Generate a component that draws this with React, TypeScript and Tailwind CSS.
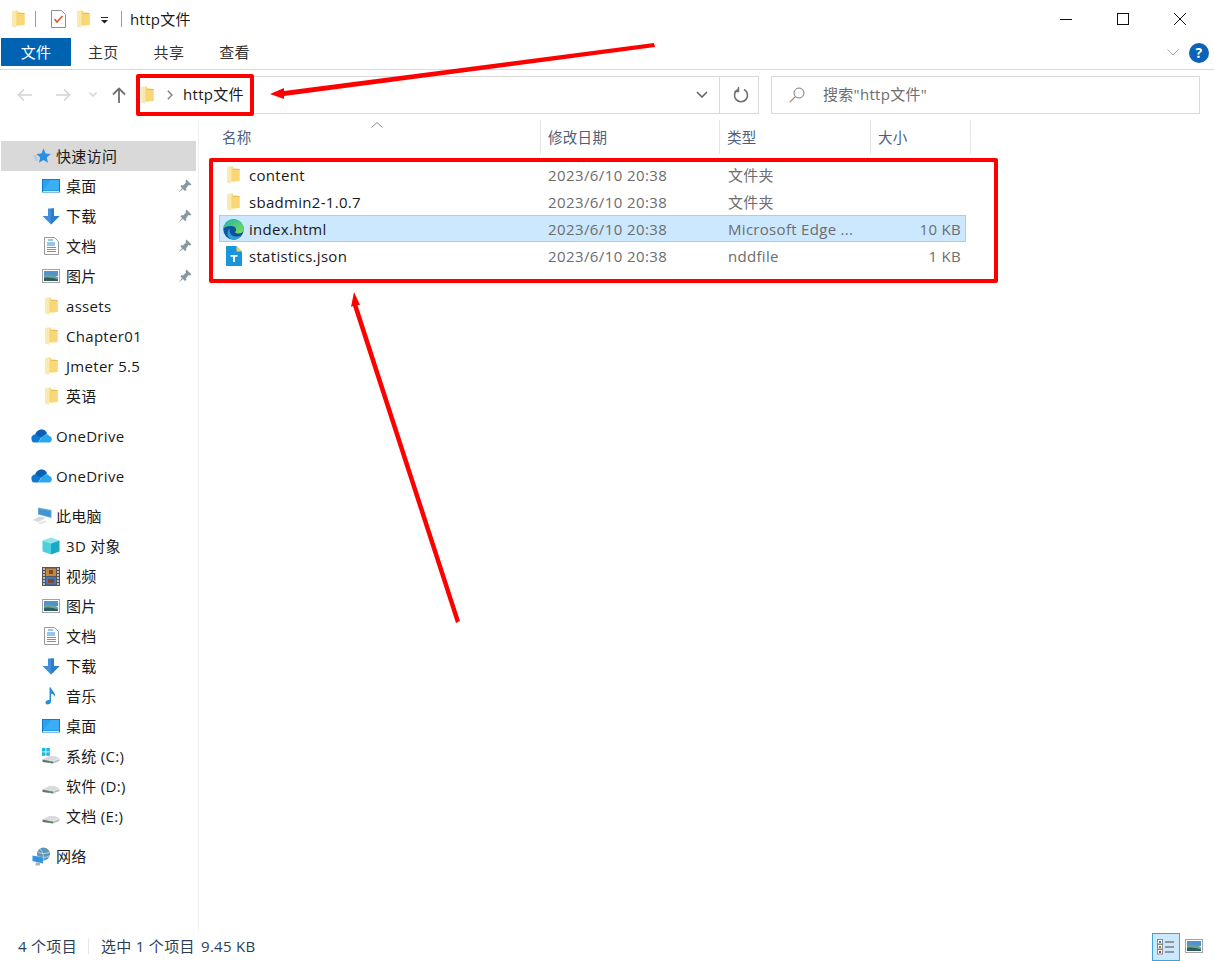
import type { ReactNode } from "react";

const FolderIcon = ({ className = "h-[18px] w-[13px]" }: { className?: string }) => (
  <svg viewBox="0 0 13 18" className={className}>
    <path d="M0.5 1 L6 0.5 L6 2.5 L12.5 3 L12.5 15 L4 15.5 L4 17.5 L0.5 16.5 Z" fill="#f6d67c" />
    <path d="M0.5 1 L4.5 0.5 L4.5 15.5 L3.8 17.5 L0.5 16.5 Z" fill="#fbeab0" />
    <path d="M4.5 3 L12.5 3 L12.5 15 L4.5 15.5 Z" fill="#fad776" />
    <path d="M6 2.8 L12.5 3 L12.5 4 L6 3.8 Z" fill="#e5b95a" />
  </svg>
);

const DesktopIcon = () => (
  <svg viewBox="0 0 18 14" className="h-[14px] w-[18px]">
    <rect x="0" y="0" width="18" height="13.5" fill="#0a7fd0" />
    <path d="M1 1 H17 V11.5 H1 Z" fill="#2aa2f0" />
    <path d="M1 11.5 L9 1 H17 V11.5 Z" fill="#4ab8f7" opacity="0.6" />
    <rect x="1" y="12" width="16" height="1" fill="#cfe9fb" />
  </svg>
);

const DownloadIcon = () => (
  <svg viewBox="0 0 18 17" className="h-[17px] w-[18px]">
    <path d="M6 0.5 H12 V8 H17.5 L9 16.5 L0.5 8 H6 Z" fill="#3d8fdc" />
    <path d="M9 0.5 H12 V8 H17.5 L9 16.5 Z" fill="#2f7cc8" />
  </svg>
);

const DocIcon = () => (
  <svg viewBox="0 0 15 18" className="h-[18px] w-[15px]">
    <path d="M0.5 0.5 H10.5 L14.5 4.5 V17.5 H0.5 Z" fill="#fff" stroke="#9a9a9a" />
    <path d="M4 3 H9 M3 6 H11 M3 8 H11" stroke="#2f8ad6" strokeWidth="1" />
    <path d="M3 10.5 H12 M3 12.5 H12 M3 14.5 H12" stroke="#8c8c8c" strokeWidth="1" />
  </svg>
);

const PictureIcon = () => (
  <svg viewBox="0 0 18 14" className="h-[14px] w-[18px]">
    <rect x="0.5" y="0.5" width="17" height="13" fill="#fff" stroke="#a4a4a4" />
    <rect x="2" y="2" width="14" height="5" fill="#4f93cf" />
    <path d="M2 7 C6 4 10 6 16 8 V12 H2 Z" fill="#6f9f96" />
    <path d="M2 9 C7 8 11 9 16 10.5 V12 H2 Z" fill="#2c5f63" />
  </svg>
);

const PinIcon = () => (
  <svg viewBox="0 0 14 14" className="h-[14px] w-[14px]">
    <path d="M8.5 0.5 L13.5 5.5 L12 6.5 L10.5 6 L8 9.5 L8.5 11 L7 12 L2.5 7.5 L3.5 6 L5 6.5 L8 3.5 L7.5 2 Z" fill="#8b979f" />
    <path d="M4 9 L0.5 13.5 L5 10 Z" fill="#8b979f" />
  </svg>
);

const StarIcon = () => (
  <svg viewBox="0 0 18 16" className="h-[16px] w-[18px]">
    <path d="M10.5 0.5 L12.6 5.6 L17.8 6 L13.8 9.4 L15 14.8 L10.5 12 L6 14.8 L7.2 9.4 L3.5 6 L8.4 5.6 Z" fill="#2a8fe0" />
    <path d="M0 8 H4 M1 10 H5 M2 12 H5" stroke="#8cc4ee" strokeWidth="1" />
  </svg>
);

const CloudIcon = () => (
  <svg viewBox="0 0 21 14" className="h-[14px] w-[21px]">
    <path d="M4 7 C4 2.5 8 0 11.5 0.5 C14 1 15.5 2.5 16 4.5 L10 9 Z" fill="#0a5fb4" />
    <path d="M0.5 10 C0 7 2 5.5 4.5 5.5 L10 9 L7 13.5 H3 C1.5 13.5 0.7 12 0.5 10 Z" fill="#0f78d4" />
    <path d="M7 13.5 L12 7 C14 4.5 17.5 4.5 18 7 C20 7 21 9 20.8 10.5 C20.7 12.5 19.5 13.5 18 13.5 Z" fill="#29a8ea" />
  </svg>
);

const PcIcon = () => (
  <svg viewBox="0 0 20 18" className="h-[18px] w-[20px]">
    <path d="M6 0.5 L19.5 3 V11 L6 7.5 Z" fill="#6fa8cf" />
    <path d="M7 2 L18.5 4 V10 L7 7 Z" fill="#3d94d6" />
    <path d="M0.5 13 L8 9.5 L14 11 L6 15 Z" fill="#d5d9dc" />
    <path d="M6 15.5 L13 13.5 L15 15 L8 17.5 Z" fill="#e4e7e9" />
  </svg>
);

const CubeIcon = () => (
  <svg viewBox="0 0 18 18" className="h-[18px] w-[18px]">
    <path d="M9 0.5 L17.5 3.5 L9 6.5 L0.5 3.5 Z" fill="#8fe3ea" />
    <path d="M0.5 3.5 L9 6.5 V17.5 L0.5 14.5 Z" fill="#4fcfdc" />
    <path d="M17.5 3.5 V14.5 L9 17.5 V6.5 Z" fill="#18a9c4" />
  </svg>
);

const FilmIcon = () => (
  <svg viewBox="0 0 18 19" className="h-[19px] w-[18px]">
    <rect width="18" height="19" fill="#555" />
    <path d="M1 2 H3 M1 5 H3 M1 8 H3 M1 11 H3 M1 14 H3 M1 17 H3 M15 2 H17 M15 5 H17 M15 8 H17 M15 11 H17 M15 14 H17 M15 17 H17" stroke="#ddd" strokeWidth="1.4" />
    <rect x="4" y="1.5" width="10" height="7.5" fill="#c9853a" />
    <rect x="4" y="10" width="10" height="7.5" fill="#3e78c4" />
    <path d="M7 3 H11 V7 H7 Z M6 12 H12 V16 H6 Z" fill="#7d4a2a" />
  </svg>
);

const MusicIcon = () => (
  <svg viewBox="0 0 12 18" className="h-[18px] w-[12px]">
    <path d="M4.5 0.5 H6 C6.5 4 11 5 10 10 C9.5 8 8 7 6 6.8 V14.5 C6 16.5 4 17.5 2.5 17.5 C1 17.5 0.5 16.5 0.5 15.5 C0.5 14 2.5 12.8 4.5 13.2 Z" fill="#1f8fe0" />
  </svg>
);

const DriveIcon = ({ windows }: { windows?: boolean }) => (
  <svg viewBox="0 0 18 16" className="h-[16px] w-[18px]">
    {windows && (
      <g fill="#19b5e8">
        <rect x="0" y="0" width="3.5" height="3.5" />
        <rect x="4.3" y="0" width="3.5" height="3.5" />
        <rect x="0" y="4.3" width="3.5" height="3.5" />
        <rect x="4.3" y="4.3" width="3.5" height="3.5" />
      </g>
    )}
    <path d="M0.5 11.5 L7 8 H13 L17.5 10.5 L11 13 Z" fill="#d9dcdd" />
    <path d="M0.5 11.5 L11 13.5 V15.5 L0.5 14 Z" fill="#6d6f70" />
    <path d="M11 13.5 L17.5 11 V13 L11 15.5 Z" fill="#b9bcbd" />
    <rect x="7" y="13.5" width="2" height="1.2" fill="#3fd14a" />
  </svg>
);

const NetIcon = () => (
  <svg viewBox="0 0 19 19" className="h-[19px] w-[19px]">
    <circle cx="11.5" cy="7" r="6.5" fill="#5f95b5" />
    <path d="M8 2 C11 5 12 9 11 13 M6 5 C9 7 14 7 17.5 5 M5.5 9 C9 11 14 11 18 8.5" stroke="#cfe2ee" strokeWidth="0.8" fill="none" />
    <path d="M0.5 8.5 L11 10.5 V16.5 L0.5 14 Z" fill="#2f95e2" />
    <path d="M4 15 L8 16 V18.5 H3.5 Z" fill="#aab4bb" />
  </svg>
);

const EdgeIcon = () => (
  <svg viewBox="0 0 21 21" className="h-[21px] w-[21px]">
    <defs>
      <linearGradient id="edge-top" x1="0" y1="0" x2="1" y2="1">
        <stop offset="0" stopColor="#1fb6a8" />
        <stop offset="1" stopColor="#7ede56" />
      </linearGradient>
      <linearGradient id="edge-low" x1="0" y1="0" x2="1" y2="0">
        <stop offset="0" stopColor="#0c59a4" />
        <stop offset="1" stopColor="#114a8b" />
      </linearGradient>
    </defs>
    <circle cx="10.5" cy="10.5" r="10.2" fill="url(#edge-low)" />
    <path d="M0.4 9.5 C1.5 3.5 6 0.3 10.5 0.3 C16 0.3 20.7 4.5 20.7 10 C20.7 13 18.5 14.5 15.5 14.5 C13.5 14.5 12 13.8 12 13 C14 12 13.5 8 10 7.2 C6 6.3 2 7.5 0.4 9.5 Z" fill="url(#edge-top)" />
    <path d="M9.5 20.6 C4 19.5 3 12.5 7 9.2 C5.5 13 8 17.5 13 17.5 C15 17.5 17 17 18.5 16 C16.5 19.5 13 21.2 9.5 20.6 Z" fill="#2b9fe0" />
  </svg>
);

const TextFileIcon = () => (
  <svg viewBox="0 0 16 20" className="h-[20px] w-[16px]">
    <path d="M1 0 H10.5 L16 5.5 V19 C16 19.6 15.6 20 15 20 H1 C0.4 20 0 19.6 0 19 V1 C0 0.4 0.4 0 1 0 Z" fill="#1796dc" />
    <path d="M10.5 0 L16 5.5 H10.5 Z" fill="#f1cf6b" />
    <path d="M4.5 9 H11.5 V10.8 H9 V16 H7 V10.8 H4.5 Z" fill="#fff" />
  </svg>
);

const NavRow = ({
  icon,
  label,
  top,
  pinned,
  active,
}: {
  icon: ReactNode;
  label: string;
  top?: boolean;
  pinned?: boolean;
  active?: boolean;
}) => (
  <div
    className={`flex h-[30px] items-center ${active ? "bg-[#d9d9d9]" : ""} ${top ? "pl-[30px]" : "pl-[41px]"} ml-px mr-[2px]`}
  >
    <div className={`flex items-center justify-center ${top ? "w-[21px]" : "w-[18px]"}`}>{icon}</div>
    <span className={`${top ? "ml-[4px]" : "ml-[6px]"} text-[15px] whitespace-nowrap text-[#1a1a1a]`}>{label}</span>
    {pinned && (
      <div className="mr-[4px] ml-auto">
        <PinIcon />
      </div>
    )}
  </div>
);

const files = [
  { icon: <FolderIcon />, name: "content", type: "文件夹", size: "" },
  { icon: <FolderIcon />, name: "sbadmin2-1.0.7", type: "文件夹", size: "" },
  { icon: <EdgeIcon />, name: "index.html", type: "Microsoft Edge ...", size: "10 KB", selected: true },
  { icon: <TextFileIcon />, name: "statistics.json", type: "nddfile", size: "1 KB" },
];

const App = () => {
  return (
    <div className="relative flex h-[961px] w-[1214px] flex-col overflow-hidden bg-white font-['Open_Sans','Noto_Sans_CJK_SC',sans-serif] tracking-[0.3px] text-[#1a1a1a]">
      {/* title bar */}
      <div className="flex h-[38px] items-center">
        <div className="ml-[12px]">
          <FolderIcon className="h-[18px] w-[13px]" />
        </div>
        <div className="ml-[10px] h-[16px] w-px bg-[#9a9a9a]" />
        <svg viewBox="0 0 15 18" className="ml-[15px] h-[18px] w-[15px]">
          <path d="M0.5 0.5 H10.5 L14.5 4.5 V17.5 H0.5 Z" fill="#fff" stroke="#8f8f8f" />
          <path d="M3.5 9 L6 12 L11.5 6" stroke="#e2572b" strokeWidth="1.6" fill="none" />
        </svg>
        <div className="ml-[11px]">
          <FolderIcon />
        </div>
        <svg viewBox="0 0 8 7" className="ml-[11px] mt-[3px] h-[7px] w-[8px]">
          <rect x="0" y="0" width="7" height="1" fill="#222" />
          <path d="M0 3 H7 L3.5 6.5 Z" fill="#222" />
        </svg>
        <div className="ml-[12px] h-[16px] w-px bg-[#9a9a9a]" />
        <span className="ml-[8px] text-[15px]">http文件</span>
        <svg viewBox="0 0 12 12" className="ml-auto h-[12px] w-[12px]">
          <path d="M0 6.5 H12" stroke="#111" strokeWidth="1" />
        </svg>
        <svg viewBox="0 0 12 12" className="ml-[45px] h-[12px] w-[12px]">
          <rect x="0.5" y="0.5" width="11" height="11" fill="none" stroke="#111" />
        </svg>
        <svg viewBox="0 0 12 12" className="mr-[28px] ml-[45px] h-[12px] w-[12px]">
          <path d="M0 0 L12 12 M12 0 L0 12" stroke="#111" strokeWidth="1" />
        </svg>
      </div>

      {/* ribbon tabs */}
      <div className="flex h-[32px] items-start border-b border-[#dadada]">
        <div className="ml-px flex h-[28px] w-[70px] items-center justify-center bg-[#0063b1] text-[15px] text-white">文件</div>
        <span className="ml-[17px] flex h-[28px] items-center text-[15px] text-[#333]">主页</span>
        <span className="ml-[35px] flex h-[28px] items-center text-[15px] text-[#333]">共享</span>
        <span className="ml-[35px] flex h-[28px] items-center text-[15px] text-[#333]">查看</span>
        <svg viewBox="0 0 12 7" className="mt-[11px] ml-auto h-[7px] w-[12px]">
          <path d="M0.5 0.5 L6 6 L11.5 0.5" stroke="#a8a8a8" fill="none" />
        </svg>
        <div className="mt-[5px] mr-[5px] ml-[10px] flex h-[20px] w-[20px] items-center justify-center rounded-full bg-[#0a63b8] text-[14px] leading-none font-bold text-white">
          ?
        </div>
      </div>

      {/* address bar */}
      <div className="mt-[5px] flex h-[39px] items-center">
        <svg viewBox="0 0 16 14" className="ml-[17px] h-[14px] w-[16px]">
          <path d="M15 7 H1.5 M7 1.5 L1.5 7 L7 12.5" stroke="#d4d4d4" strokeWidth="1.6" fill="none" />
        </svg>
        <svg viewBox="0 0 16 14" className="ml-[22px] h-[14px] w-[16px]">
          <path d="M1 7 H14.5 M9 1.5 L14.5 7 L9 12.5" stroke="#d4d4d4" strokeWidth="1.6" fill="none" />
        </svg>
        <svg viewBox="0 0 8 5" className="ml-[18px] h-[5px] w-[8px]">
          <path d="M0.5 0.5 L4 4 L7.5 0.5" stroke="#d4d4d4" strokeWidth="1.4" fill="none" />
        </svg>
        <svg viewBox="0 0 14 16" className="ml-[15px] h-[16px] w-[14px]">
          <path d="M7 16 V2 M1 7.5 L7 1.5 L13 7.5" stroke="#6f6f6f" strokeWidth="1.8" fill="none" />
        </svg>
        <div className="ml-[10px] flex h-[38px] w-[623px] items-center border border-[#d9d9d9]">
          <div className="ml-[4px]">
            <FolderIcon />
          </div>
          <svg viewBox="0 0 6 10" className="ml-[13px] h-[10px] w-[6px]">
            <path d="M0.8 0.8 L5 5 L0.8 9.2" stroke="#7c7c7c" strokeWidth="1.3" fill="none" />
          </svg>
          <span className="ml-[10px] text-[15px]">http文件</span>
          <svg viewBox="0 0 12 7" className="ml-auto h-[7px] w-[12px]">
            <path d="M1 1 L6 6 L11 1" stroke="#666" strokeWidth="1.6" fill="none" />
          </svg>
          <div className="ml-[11px] flex h-full w-[39px] items-center justify-center border-l border-[#d9d9d9]">
            <svg viewBox="0 0 16 16" className="ml-[3px] h-[16px] w-[16px]">
              <path d="M5 2.5 A6.5 6.5 0 1 0 11 2.5" stroke="#6f6f6f" strokeWidth="1.6" fill="none" />
              <path d="M4 0 V4.5 H0" stroke="#6f6f6f" strokeWidth="1.4" fill="none" transform="translate(1.5 0)" />
            </svg>
          </div>
        </div>
        <div className="ml-[12px] flex h-[38px] w-[429px] items-center border border-[#d9d9d9]">
          <svg viewBox="0 0 16 16" className="ml-[17px] h-[16px] w-[16px]">
            <circle cx="10" cy="6" r="5" stroke="#7a7a7a" fill="none" />
            <path d="M6.5 9.5 L0.8 15.2" stroke="#b58a5a" strokeWidth="1.2" />
          </svg>
          <span className="ml-[18px] text-[15px] text-[#6d6d6d]">搜索"http文件"</span>
        </div>
      </div>

      {/* body */}
      <div className="mt-[6px] flex min-h-0 flex-1">
        <nav className="w-[199px] border-r border-[#f0f0f0] pt-[21px]">
          <NavRow top active icon={<StarIcon />} label="快速访问" />
          <NavRow pinned icon={<DesktopIcon />} label="桌面" />
          <NavRow pinned icon={<DownloadIcon />} label="下载" />
          <NavRow pinned icon={<DocIcon />} label="文档" />
          <NavRow pinned icon={<PictureIcon />} label="图片" />
          <NavRow icon={<FolderIcon />} label="assets" />
          <NavRow icon={<FolderIcon />} label="Chapter01" />
          <NavRow icon={<FolderIcon />} label="Jmeter 5.5" />
          <NavRow icon={<FolderIcon />} label="英语" />
          <div className="mt-[10px]">
            <NavRow top icon={<CloudIcon />} label="OneDrive" />
          </div>
          <div className="mt-[10px]">
            <NavRow top icon={<CloudIcon />} label="OneDrive" />
          </div>
          <div className="mt-[10px]">
            <NavRow top icon={<PcIcon />} label="此电脑" />
          </div>
          <NavRow icon={<CubeIcon />} label="3D 对象" />
          <NavRow icon={<FilmIcon />} label="视频" />
          <NavRow icon={<PictureIcon />} label="图片" />
          <NavRow icon={<DocIcon />} label="文档" />
          <NavRow icon={<DownloadIcon />} label="下载" />
          <NavRow icon={<MusicIcon />} label="音乐" />
          <NavRow icon={<DesktopIcon />} label="桌面" />
          <NavRow icon={<DriveIcon windows />} label="系统 (C:)" />
          <NavRow icon={<DriveIcon />} label="软件 (D:)" />
          <NavRow icon={<DriveIcon />} label="文档 (E:)" />
          <div className="mt-[10px]">
            <NavRow top icon={<NetIcon />} label="网络" />
          </div>
        </nav>

        <main className="relative flex-1 pl-[20px]">
          <svg viewBox="0 0 12 6" className="absolute top-[2px] left-[172px] h-[6px] w-[12px]">
            <path d="M0.5 5.5 L6 0.5 L11.5 5.5" stroke="#8a8a8a" fill="none" />
          </svg>
          <div className="flex h-[34px] text-[14.5px] text-[#4c607a]">
            <div className="flex w-[322px] items-center border-r border-[#e5e5e5] pt-px pl-[3px]">名称</div>
            <div className="flex w-[179px] items-center border-r border-[#e5e5e5] pt-px pl-[7px]">修改日期</div>
            <div className="flex w-[151px] items-center border-r border-[#e5e5e5] pt-px pl-[7px]">类型</div>
            <div className="flex w-[100px] items-center border-r border-[#e5e5e5] pt-px pl-[7px]">大小</div>
          </div>
          <div className="mt-[7px] w-[747px]">
            {files.map((f) => (
              <div
                key={f.name}
                className={`flex h-[27px] items-center border pt-px text-[15px] ${f.selected ? "border-[#99d1ff] bg-[#cce8ff]" : "border-transparent"}`}
              >
                <div className="flex w-[321px] items-center">
                  <div className="ml-[3px] flex w-[21px] justify-center">{f.icon}</div>
                  <span className="ml-[5px] text-[#1a1a1a]">{f.name}</span>
                </div>
                <span className="w-[180px] pl-[7px] tracking-[0.4px] text-[#6d6d6d]">2023/6/10 20:38</span>
                <span className="w-[150px] pl-[7px] text-[#6d6d6d]">{f.type}</span>
                <span className="flex-1 pr-[4px] text-right text-[#6d6d6d]">{f.size}</span>
              </div>
            ))}
          </div>
        </main>
      </div>

      {/* status bar */}
      <div className="flex h-[30px] items-center text-[15px] text-[#2a3f55]">
        <span className="ml-[18px] w-[70px]">4 个项目</span>
        <div className="h-[16px] w-px bg-[#e8e8e8]" />
        <span className="ml-[12px] w-[100px]">选中 1 个项目</span>
        <span>9.45 KB</span>
        <div className="mt-[1px] ml-auto flex h-[28px] w-[28px] items-center justify-center border border-[#3fa2dd] bg-[#cce8ff]">
          <svg viewBox="0 0 18 16" className="h-[16px] w-[18px]">
            <rect x="0.5" y="0.5" width="5" height="4.5" fill="#fff" stroke="#8a8a8a" />
            <rect x="0.5" y="5.5" width="5" height="4.5" fill="#fff" stroke="#8a8a8a" />
            <rect x="0.5" y="10.5" width="5" height="4.5" fill="#fff" stroke="#8a8a8a" />
            <rect x="2" y="2" width="2" height="2" fill="#3a7fc0" />
            <rect x="2" y="7" width="2" height="2" fill="#8c7a2e" />
            <rect x="2" y="12" width="2" height="2" fill="#b0402a" />
            <path d="M8 3 H17 M8 8 H17 M8 13 H17" stroke="#7c7c7c" strokeWidth="1.4" />
          </svg>
        </div>
        <div className="mr-[11px] ml-[5px]">
          <PictureIcon />
        </div>
      </div>

      {/* annotations drawn on top of the screenshot */}
      <div className="absolute top-[74px] left-[136px] h-[42px] w-[118px] rounded-[2px] border-[4px] border-[#ff0000]" />
      <div className="absolute top-[158px] left-[209px] h-[125px] w-[789px] rounded-[2px] border-[4px] border-[#ff0000]" />
      <svg className="pointer-events-none absolute inset-0 h-full w-full" viewBox="0 0 1214 961">
        <path d="M270 94 L284 88 L284 91 L654 43 L655 47 L284 96 L284 99 Z" fill="#ff0000" />
        <path d="M354 292 L360 305 L357.5 305 L460 621 L456 623 L353 306 L351 307 Z" fill="#ff0000" />
      </svg>
    </div>
  );
};

export default App;
